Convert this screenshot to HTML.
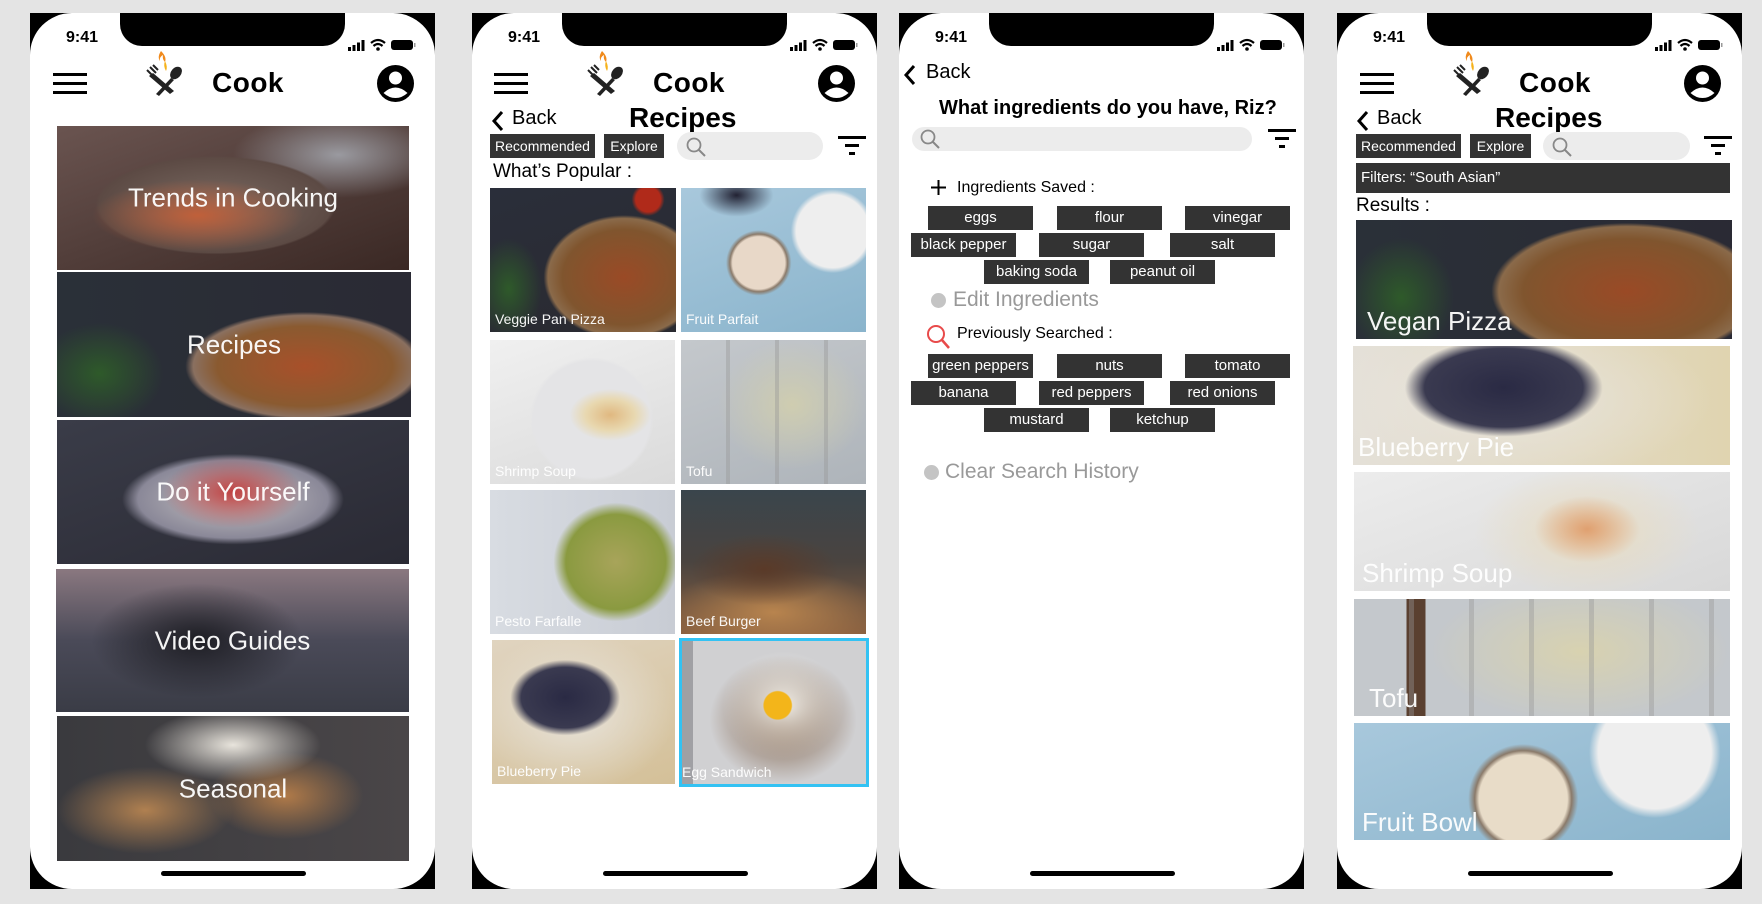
<!DOCTYPE html>
<html><head><meta charset="utf-8">
<style>
*{margin:0;padding:0;box-sizing:border-box}
body{width:1762px;height:904px;background:#e4e4e4;position:relative;overflow:hidden;font-family:"Liberation Sans",sans-serif;color:#000}
.a{position:absolute}
.phone{position:absolute;top:13px;width:405px;height:876px;background:#000}
.scr{position:absolute;inset:0;background:#fff;border-radius:42px;overflow:hidden}
.notch{position:absolute;top:0;left:90px;width:225px;height:33px;background:#000;border-radius:0 0 22px 22px}
.time{position:absolute;top:16px;left:36px;font-size:16px;font-weight:bold}
.home{position:absolute;bottom:13px;left:131px;width:145px;height:5px;border-radius:3px;background:#000}
.hb{position:absolute;width:34px;height:21px}
.hb i{position:absolute;left:0;width:34px;height:3px;background:#000}
.cook{position:absolute;font-size:28px;font-weight:bold;letter-spacing:.5px}
.chip{position:absolute;background:#333;color:#fff;font-size:14px;text-align:center;line-height:24px;height:24px;white-space:nowrap}
.search{position:absolute;background:#ececec;border-radius:14px}
.img{position:absolute;overflow:hidden}
.img span{position:absolute;color:#fff;white-space:nowrap;opacity:.95}
.t1{font-size:26px;width:100%;text-align:center;top:50%;transform:translateY(-50%)}
.t2{font-size:14px;left:5px;bottom:5px}
.t4{font-size:26px;left:11px;bottom:2px}
.ch3{position:absolute;background:#333;color:#fff;font-size:15px;text-align:center;height:24px;line-height:24px;width:105px}
.st{left:317px;top:25px}
</style></head><body>

<!-- ================= PHONE 1 ================= -->
<div class="phone" style="left:30px">
<div class="scr">
 <div class="notch"></div>
 <div class="time">9:41</div>
 <svg class="a st" width="70" height="14" viewBox="0 0 70 14"><rect x="1" y="9" width="3" height="4"/><rect x="5.5" y="7" width="3" height="6"/><rect x="10" y="4.5" width="3" height="8.5"/><rect x="14.5" y="2" width="3" height="11"/><path d="M24 5 Q31 -1 38 5" stroke="#000" stroke-width="2.2" fill="none"/><path d="M26.5 8 Q31 4 35.5 8" stroke="#000" stroke-width="2.2" fill="none"/><circle cx="31" cy="11" r="1.8"/><rect x="44" y="2" width="22" height="10" rx="3"/><rect x="67" y="5" width="1.5" height="4" fill="#999"/></svg>
 <div class="hb" style="left:23px;top:60px"><i style="top:0"></i><i style="top:9px"></i><i style="top:18px"></i></div>
 <svg class="a" style="left:115px;top:36px" width="40" height="48" viewBox="0 0 40 48"><path d="M16 2 Q12 8 15 12 Q14 8 18 6 Q17 10 20 13 Q22 8 16 2Z" fill="#f08a1c"/><path d="M20 12 Q18 17 21 22 Q23 18 20 12Z" fill="#f6b21a"/><path d="M4 27 L25 45 L29 42 L8 24Z" fill="#222"/><path d="M2 21 L8 27 M5 18 L11 24 M8 16 L13 21" stroke="#222" stroke-width="2"/><path d="M11 45 L26 29 L29 31 L14 47Z" fill="#222"/><ellipse cx="31" cy="24" rx="5" ry="7" transform="rotate(40 31 24)" fill="#222"/></svg>
 <div class="cook" style="left:182px;top:54px">Cook</div>
 <svg class="a" style="left:347px;top:52px" width="37" height="37" viewBox="0 0 37 37"><circle cx="18.5" cy="18.5" r="18.5"/><circle cx="18.5" cy="13" r="6.5" fill="#fff"/><path d="M6.5 28 Q18.5 17 30.5 28 Q25 33 18.5 33 Q12 33 6.5 28Z" fill="#fff"/></svg>

 <div class="img" style="left:27px;top:113px;width:352px;height:144px;background:radial-gradient(ellipse 30% 25% at 40% 62%,#c0603a,transparent),radial-gradient(ellipse 55% 55% at 45% 55%,#7a6a62 0,#5c4a44 60%,transparent 62%),radial-gradient(ellipse 30% 30% at 80% 20%,#9a9aa0,transparent),linear-gradient(160deg,#6a5450,#3a2824)"><span class="t1">Trends in Cooking</span></div>
 <div class="img" style="left:27px;top:259px;width:354px;height:145px;background:radial-gradient(ellipse 45% 50% at 70% 65%,#a8502a 0,#8a5a30 55%,#8a7060 70%,transparent 75%),radial-gradient(ellipse 18% 35% at 12% 70%,#2e5a2a,transparent),linear-gradient(90deg,#2a3038,#2a2a34)"><span class="t1">Recipes</span></div>
 <div class="img" style="left:27px;top:407px;width:352px;height:144px;background:radial-gradient(ellipse 20% 25% at 50% 50%,#c04040,transparent),radial-gradient(ellipse 45% 45% at 50% 55%,#c8c4c4 0,#8a8898 60%,transparent 70%),linear-gradient(160deg,#3a3c48,#2a2a34)"><span class="t1">Do it Yourself</span></div>
 <div class="img" style="left:26px;top:556px;width:353px;height:143px;background:radial-gradient(ellipse 30% 40% at 40% 50%,#1e1e24,transparent),linear-gradient(180deg,#8a7880,#4a4a58 50%,#3a3c46)"><span class="t1">Video Guides</span></div>
 <div class="img" style="left:27px;top:703px;width:352px;height:145px;background:radial-gradient(ellipse 25% 30% at 25% 65%,#b08050,transparent),radial-gradient(ellipse 25% 25% at 50% 20%,#e8e4dc,transparent),radial-gradient(ellipse 22% 30% at 65% 55%,#b07a48,transparent),linear-gradient(90deg,#3a3a3e,#4a4648)"><span class="t1">Seasonal</span></div>
 <div class="home"></div>
</div></div>

<!-- ================= PHONE 2 ================= -->
<div class="phone" style="left:472px">
<div class="scr">
 <div class="notch"></div>
 <div class="time">9:41</div>
 <svg class="a st" width="70" height="14" viewBox="0 0 70 14"><rect x="1" y="9" width="3" height="4"/><rect x="5.5" y="7" width="3" height="6"/><rect x="10" y="4.5" width="3" height="8.5"/><rect x="14.5" y="2" width="3" height="11"/><path d="M24 5 Q31 -1 38 5" stroke="#000" stroke-width="2.2" fill="none"/><path d="M26.5 8 Q31 4 35.5 8" stroke="#000" stroke-width="2.2" fill="none"/><circle cx="31" cy="11" r="1.8"/><rect x="44" y="2" width="22" height="10" rx="3"/><rect x="67" y="5" width="1.5" height="4" fill="#999"/></svg>
 <div class="hb" style="left:22px;top:60px"><i style="top:0"></i><i style="top:9px"></i><i style="top:18px"></i></div>
 <svg class="a" style="left:114px;top:36px" width="40" height="48" viewBox="0 0 40 48"><path d="M16 2 Q12 8 15 12 Q14 8 18 6 Q17 10 20 13 Q22 8 16 2Z" fill="#f08a1c"/><path d="M20 12 Q18 17 21 22 Q23 18 20 12Z" fill="#f6b21a"/><path d="M4 27 L25 45 L29 42 L8 24Z" fill="#222"/><path d="M2 21 L8 27 M5 18 L11 24 M8 16 L13 21" stroke="#222" stroke-width="2"/><path d="M11 45 L26 29 L29 31 L14 47Z" fill="#222"/><ellipse cx="31" cy="24" rx="5" ry="7" transform="rotate(40 31 24)" fill="#222"/></svg>
 <div class="cook" style="left:181px;top:54px">Cook</div>
 <svg class="a" style="left:346px;top:52px" width="37" height="37" viewBox="0 0 37 37"><circle cx="18.5" cy="18.5" r="18.5"/><circle cx="18.5" cy="13" r="6.5" fill="#fff"/><path d="M6.5 28 Q18.5 17 30.5 28 Q25 33 18.5 33 Q12 33 6.5 28Z" fill="#fff"/></svg>
 <svg class="a" style="left:19px;top:97px" width="14" height="22" viewBox="0 0 14 22"><path d="M11 2 L3 11 L11 20" stroke="#000" stroke-width="3" fill="none"/></svg>
 <div class="a" style="left:40px;top:94px;font-size:20px">Back</div>
 <div class="a" style="left:157px;top:89px;font-size:28px;font-weight:bold">Recipes</div>
 <div class="chip" style="left:18px;top:121px;width:105px">Recommended</div>
 <div class="chip" style="left:132px;top:121px;width:60px">Explore</div>
 <div class="search" style="left:205px;top:119px;width:146px;height:28px"></div>
 <svg class="a" style="left:213px;top:123px" width="22" height="22" viewBox="0 0 22 22"><circle cx="9" cy="9" r="6.5" stroke="#888" stroke-width="1.8" fill="none"/><path d="M14 14 L20 20" stroke="#888" stroke-width="2"/></svg>
 <svg class="a" style="left:366px;top:123px" width="28" height="20" viewBox="0 0 28 20"><rect x="0" y="0" width="28" height="3"/><rect x="7" y="8" width="14" height="3"/><rect x="11" y="16" width="6" height="3"/></svg>
 <div class="a" style="left:21px;top:148px;font-size:19px">What’s Popular :</div>

 <div class="img" style="left:18px;top:175px;width:186px;height:144px;background:radial-gradient(ellipse 60% 60% at 72% 62%,#9a4a26 0,#80552e 55%,#8a6a4a 68%,transparent 72%),radial-gradient(ellipse 18% 35% at 10% 70%,#2e5a2a,transparent),radial-gradient(circle at 85% 8%,#b02a1a 0 6%,transparent 8%),linear-gradient(160deg,#2a2e3a,#2a2a30)"><span class="t2">Veggie Pan Pizza</span></div>
 <div class="img" style="left:209px;top:175px;width:185px;height:144px;background:radial-gradient(circle at 42% 52%,#e8d8c8 0 20%,#8a7a6a 22%,transparent 25%),radial-gradient(circle at 82% 30%,#eee 0 20%,transparent 23%),radial-gradient(ellipse 20% 15% at 30% 5%,#223,transparent),linear-gradient(160deg,#a8c8dc,#8ab4cc)"><span class="t2">Fruit Parfait</span></div>
 <div class="img" style="left:18px;top:327px;width:185px;height:144px;background:radial-gradient(ellipse 22% 18% at 65% 52%,#e0b880 0,#e8d8b0 60%,transparent 100%),radial-gradient(circle at 55% 55%,#e4e4e6 0 45%,transparent 48%),linear-gradient(160deg,#f0f0f0,#dadada)"><span class="t2">Shrimp Soup</span></div>
 <div class="img" style="left:209px;top:327px;width:185px;height:144px;background:repeating-linear-gradient(90deg,transparent 0 45px,rgba(150,150,150,.4) 45px 49px),radial-gradient(ellipse 40% 45% at 60% 45%,#cfcdb0,transparent),linear-gradient(160deg,#c4c8cc,#aeb4ba)"><span class="t2">Tofu</span></div>
 <div class="img" style="left:18px;top:477px;width:185px;height:144px;background:radial-gradient(ellipse 45% 55% at 68% 50%,#a8a45a 0,#8a9a40 60%,transparent 75%),linear-gradient(90deg,#d8dce2,#c8ccd4)"><span class="t2">Pesto Farfalle</span></div>
 <div class="img" style="left:209px;top:477px;width:185px;height:144px;background:radial-gradient(ellipse 40% 25% at 45% 55%,#5a3a28,transparent),radial-gradient(ellipse 60% 30% at 50% 85%,#b8844e,transparent),linear-gradient(180deg,#3a454c,#4a4440 50%,#8a6040)"><span class="t2">Beef Burger</span></div>
 <div class="img" style="left:20px;top:627px;width:183px;height:144px;background:radial-gradient(ellipse 40% 35% at 40% 40%,#2a2a44 0,#3a3a50 60%,transparent 75%),radial-gradient(ellipse 55% 55% at 45% 50%,#e8e4dc,transparent),linear-gradient(160deg,#e0d4c0,#d4c098)"><span class="t2">Blueberry Pie</span></div>
 <div class="img" style="left:207px;top:625px;width:190px;height:149px;border:3px solid #33c2f3;background:radial-gradient(circle at 52% 45%,#f3b51a 0 11%,transparent 12%),radial-gradient(ellipse 33% 38% at 55% 45%,#f2f0ea,transparent),radial-gradient(ellipse 40% 45% at 55% 55%,#7a5a40,transparent),linear-gradient(90deg,#a0a0a4 0 6%,#d0d0d2 6%)"><span class="t2" style="left:0;bottom:4px">Egg Sandwich</span></div>
 <div class="home"></div>
</div></div>

<!-- ================= PHONE 3 ================= -->
<div class="phone" style="left:899px">
<div class="scr">
 <div class="notch"></div>
 <div class="time">9:41</div>
 <svg class="a st" width="70" height="14" viewBox="0 0 70 14"><rect x="1" y="9" width="3" height="4"/><rect x="5.5" y="7" width="3" height="6"/><rect x="10" y="4.5" width="3" height="8.5"/><rect x="14.5" y="2" width="3" height="11"/><path d="M24 5 Q31 -1 38 5" stroke="#000" stroke-width="2.2" fill="none"/><path d="M26.5 8 Q31 4 35.5 8" stroke="#000" stroke-width="2.2" fill="none"/><circle cx="31" cy="11" r="1.8"/><rect x="44" y="2" width="22" height="10" rx="3"/><rect x="67" y="5" width="1.5" height="4" fill="#999"/></svg>
 <svg class="a" style="left:4px;top:51px" width="14" height="22" viewBox="0 0 14 22"><path d="M11 2 L3 11 L11 20" stroke="#000" stroke-width="3" fill="none"/></svg>
 <div class="a" style="left:27px;top:48px;font-size:20px">Back</div>
 <div class="a" style="left:40px;top:84px;font-size:20px;font-weight:bold;white-space:nowrap">What ingredients do you have, Riz?</div>
 <div class="search" style="left:13px;top:114px;width:340px;height:24px;border-radius:12px"></div>
 <svg class="a" style="left:20px;top:115px" width="22" height="22" viewBox="0 0 22 22"><circle cx="9" cy="9" r="6.5" stroke="#888" stroke-width="1.8" fill="none"/><path d="M14 14 L20 20" stroke="#888" stroke-width="2"/></svg>
 <svg class="a" style="left:369px;top:116px" width="28" height="20" viewBox="0 0 28 20"><rect x="0" y="0" width="28" height="3"/><rect x="7" y="8" width="14" height="3"/><rect x="11" y="16" width="6" height="3"/></svg>
 <svg class="a" style="left:32px;top:167px" width="15" height="15" viewBox="0 0 15 15"><path d="M7.5 0V15M0 7.5H15" stroke="#000" stroke-width="2"/></svg>
 <div class="a" style="left:58px;top:166px;font-size:16px">Ingredients Saved :</div>
 <div class="ch3" style="left:29px;top:193px">eggs</div>
 <div class="ch3" style="left:158px;top:193px">flour</div>
 <div class="ch3" style="left:286px;top:193px">vinegar</div>
 <div class="ch3" style="left:12px;top:220px">black pepper</div>
 <div class="ch3" style="left:140px;top:220px">sugar</div>
 <div class="ch3" style="left:271px;top:220px">salt</div>
 <div class="ch3" style="left:85px;top:247px">baking soda</div>
 <div class="ch3" style="left:211px;top:247px">peanut oil</div>
 <div class="a" style="left:32px;top:280px;width:15px;height:15px;border-radius:50%;background:#c4c4c4"></div>
 <div class="a" style="left:54px;top:275px;font-size:21px;color:#999">Edit Ingredients</div>
 <svg class="a" style="left:27px;top:311px" width="25" height="26" viewBox="0 0 25 26"><circle cx="10" cy="10" r="8" stroke="#e84a4a" stroke-width="2" fill="none"/><path d="M16 16 L23 24" stroke="#e84a4a" stroke-width="2.5"/></svg>
 <div class="a" style="left:58px;top:312px;font-size:16px">Previously Searched :</div>
 <div class="ch3" style="left:29px;top:341px">green peppers</div>
 <div class="ch3" style="left:158px;top:341px">nuts</div>
 <div class="ch3" style="left:286px;top:341px">tomato</div>
 <div class="ch3" style="left:12px;top:368px">banana</div>
 <div class="ch3" style="left:140px;top:368px">red peppers</div>
 <div class="ch3" style="left:271px;top:368px">red onions</div>
 <div class="ch3" style="left:85px;top:395px">mustard</div>
 <div class="ch3" style="left:211px;top:395px">ketchup</div>
 <div class="a" style="left:25px;top:452px;width:15px;height:15px;border-radius:50%;background:#c4c4c4"></div>
 <div class="a" style="left:46px;top:447px;font-size:21px;color:#999">Clear Search History</div>
 <div class="home"></div>
</div></div>

<!-- ================= PHONE 4 ================= -->
<div class="phone" style="left:1337px">
<div class="scr">
 <div class="notch"></div>
 <div class="time">9:41</div>
 <svg class="a st" width="70" height="14" viewBox="0 0 70 14"><rect x="1" y="9" width="3" height="4"/><rect x="5.5" y="7" width="3" height="6"/><rect x="10" y="4.5" width="3" height="8.5"/><rect x="14.5" y="2" width="3" height="11"/><path d="M24 5 Q31 -1 38 5" stroke="#000" stroke-width="2.2" fill="none"/><path d="M26.5 8 Q31 4 35.5 8" stroke="#000" stroke-width="2.2" fill="none"/><circle cx="31" cy="11" r="1.8"/><rect x="44" y="2" width="22" height="10" rx="3"/><rect x="67" y="5" width="1.5" height="4" fill="#999"/></svg>
 <div class="hb" style="left:23px;top:60px"><i style="top:0"></i><i style="top:9px"></i><i style="top:18px"></i></div>
 <svg class="a" style="left:115px;top:36px" width="40" height="48" viewBox="0 0 40 48"><path d="M16 2 Q12 8 15 12 Q14 8 18 6 Q17 10 20 13 Q22 8 16 2Z" fill="#f08a1c"/><path d="M20 12 Q18 17 21 22 Q23 18 20 12Z" fill="#f6b21a"/><path d="M4 27 L25 45 L29 42 L8 24Z" fill="#222"/><path d="M2 21 L8 27 M5 18 L11 24 M8 16 L13 21" stroke="#222" stroke-width="2"/><path d="M11 45 L26 29 L29 31 L14 47Z" fill="#222"/><ellipse cx="31" cy="24" rx="5" ry="7" transform="rotate(40 31 24)" fill="#222"/></svg>
 <div class="cook" style="left:182px;top:54px">Cook</div>
 <svg class="a" style="left:347px;top:52px" width="37" height="37" viewBox="0 0 37 37"><circle cx="18.5" cy="18.5" r="18.5"/><circle cx="18.5" cy="13" r="6.5" fill="#fff"/><path d="M6.5 28 Q18.5 17 30.5 28 Q25 33 18.5 33 Q12 33 6.5 28Z" fill="#fff"/></svg>
 <svg class="a" style="left:19px;top:97px" width="14" height="22" viewBox="0 0 14 22"><path d="M11 2 L3 11 L11 20" stroke="#000" stroke-width="3" fill="none"/></svg>
 <div class="a" style="left:40px;top:94px;font-size:20px">Back</div>
 <div class="a" style="left:158px;top:89px;font-size:28px;font-weight:bold">Recipes</div>
 <div class="chip" style="left:19px;top:121px;width:105px">Recommended</div>
 <div class="chip" style="left:133px;top:121px;width:61px">Explore</div>
 <div class="search" style="left:206px;top:119px;width:147px;height:28px"></div>
 <svg class="a" style="left:214px;top:123px" width="22" height="22" viewBox="0 0 22 22"><circle cx="9" cy="9" r="6.5" stroke="#888" stroke-width="1.8" fill="none"/><path d="M14 14 L20 20" stroke="#888" stroke-width="2"/></svg>
 <svg class="a" style="left:367px;top:123px" width="28" height="20" viewBox="0 0 28 20"><rect x="0" y="0" width="28" height="3"/><rect x="7" y="8" width="14" height="3"/><rect x="11" y="16" width="6" height="3"/></svg>
 <div class="a" style="left:19px;top:150px;width:374px;height:30px;background:#333;color:#fff;font-size:15px;line-height:30px;padding-left:5px">Filters: “South Asian”</div>
 <div class="a" style="left:19px;top:182px;font-size:19px">Results :</div>
 <div class="img" style="left:19px;top:207px;width:376px;height:119px;background:radial-gradient(ellipse 50% 80% at 72% 60%,#9a4a26 0,#80552e 55%,#8a6a4a 68%,transparent 72%),radial-gradient(ellipse 14% 50% at 12% 65%,#2e5a2a,transparent),linear-gradient(90deg,#2a3038,#2a2a34)"><span class="t4">Vegan Pizza</span></div>
 <div class="img" style="left:16px;top:333px;width:377px;height:119px;background:radial-gradient(ellipse 35% 55% at 40% 35%,#2a2a44 0,#3a3a50 60%,transparent 75%),radial-gradient(ellipse 55% 70% at 40% 45%,#e8e4dc,transparent),linear-gradient(90deg,#e4e0d8,#e0d4b0)"><span class="t4" style="left:5px">Blueberry Pie</span></div>
 <div class="img" style="left:17px;top:459px;width:376px;height:119px;background:radial-gradient(ellipse 14% 28% at 62% 48%,#e0a070,transparent),radial-gradient(ellipse 30% 55% at 62% 50%,#e8dcc0,transparent),linear-gradient(160deg,#ececec,#d8d8d8)"><span class="t4" style="left:8px">Shrimp Soup</span></div>
 <div class="img" style="left:17px;top:586px;width:376px;height:117px;background:repeating-linear-gradient(90deg,transparent 0 55px,rgba(150,150,150,.4) 55px 60px),radial-gradient(ellipse 40% 60% at 60% 45%,#d8d2b0,transparent),linear-gradient(90deg,#c4c8cc 0 14%,#5a4030 14% 19%,#c4c8cc 19%)"><span class="t4" style="left:15px">Tofu</span></div>
 <div class="img" style="left:17px;top:710px;width:376px;height:117px;background:radial-gradient(circle at 45% 65%,#e8dcc8 0 20%,#8a7a6a 22%,transparent 25%),radial-gradient(circle at 80% 25%,#eee 0 18%,transparent 21%),linear-gradient(160deg,#a8c8dc,#8ab4cc)"><span class="t4" style="left:8px">Fruit Bowl</span></div>
 <div class="home"></div>
</div></div>

</body></html>
